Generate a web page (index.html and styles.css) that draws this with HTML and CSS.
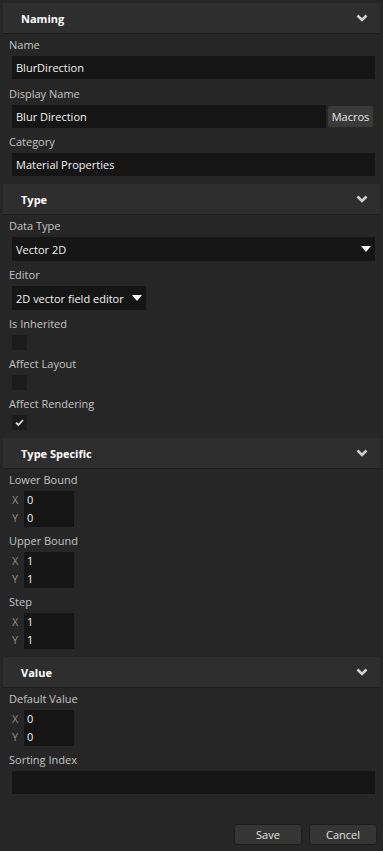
FILE: index.html
```html
<!DOCTYPE html>
<html lang="en">
<head>
    <meta charset="UTF-8">
    <meta name="viewport" content="width=device-width, initial-scale=1.0">
    <title>Property Editor</title>
    <link rel="stylesheet" href="styles.css">
</head>
<body>
    <div class="panel">
        <!-- Naming -->
        <section class="group">
            <div class="group-header">
                <span>Naming</span>
                <svg class="chevron" width="12" height="8" viewBox="0 0 12 8"><path d="M1.5 1.5 L6 6 L10.5 1.5" fill="none" stroke="#d0d0d0" stroke-width="2.6"/></svg>
            </div>
            <div class="group-body">
                <div class="field">
                    <div class="field-label">Name</div>
                    <div class="text-input">BlurDirection</div>
                </div>
                <div class="field">
                    <div class="field-label">Display Name</div>
                    <div class="input-row">
                        <div class="text-input">Blur Direction</div>
                        <button class="macro-btn">Macros</button>
                    </div>
                </div>
                <div class="field">
                    <div class="field-label">Category</div>
                    <div class="text-input">Material Properties</div>
                </div>
            </div>
        </section>

        <!-- Type -->
        <section class="group">
            <div class="group-header">
                <span>Type</span>
                <svg class="chevron" width="12" height="8" viewBox="0 0 12 8"><path d="M1.5 1.5 L6 6 L10.5 1.5" fill="none" stroke="#d0d0d0" stroke-width="2.6"/></svg>
            </div>
            <div class="group-body">
                <div class="field">
                    <div class="field-label">Data Type</div>
                    <div class="select">
                        <span>Vector 2D</span>
                        <svg class="caret" width="10" height="6" viewBox="0 0 10 6"><path d="M0 0 H10 L5 6 Z" fill="#f4f4f4"/></svg>
                    </div>
                </div>
                <div class="field">
                    <div class="field-label">Editor</div>
                    <div class="select select-short">
                        <span>2D vector field editor</span>
                        <svg class="caret" width="10" height="6" viewBox="0 0 10 6"><path d="M0 0 H10 L5 6 Z" fill="#f4f4f4"/></svg>
                    </div>
                </div>
                <div class="field">
                    <div class="field-label">Is Inherited</div>
                    <div class="checkbox"></div>
                </div>
                <div class="field">
                    <div class="field-label">Affect Layout</div>
                    <div class="checkbox"></div>
                </div>
                <div class="field">
                    <div class="field-label">Affect Rendering</div>
                    <div class="checkbox">
                        <svg width="15" height="15" viewBox="0 0 15 15"><path d="M4 7.6 L6.4 10 L11 5" fill="none" stroke="#e8e8e8" stroke-width="1.8"/></svg>
                    </div>
                </div>
            </div>
        </section>

        <!-- Type Specific -->
        <section class="group">
            <div class="group-header">
                <span>Type Specific</span>
                <svg class="chevron" width="12" height="8" viewBox="0 0 12 8"><path d="M1.5 1.5 L6 6 L10.5 1.5" fill="none" stroke="#d0d0d0" stroke-width="2.6"/></svg>
            </div>
            <div class="group-body">
                <div class="field">
                    <div class="field-label">Lower Bound</div>
                    <div class="vector">
                        <div class="vector-axes"><span>X</span><span>Y</span></div>
                        <div class="vector-values"><span>0</span><span>0</span></div>
                    </div>
                </div>
                <div class="field">
                    <div class="field-label">Upper Bound</div>
                    <div class="vector">
                        <div class="vector-axes"><span>X</span><span>Y</span></div>
                        <div class="vector-values"><span>1</span><span>1</span></div>
                    </div>
                </div>
                <div class="field">
                    <div class="field-label">Step</div>
                    <div class="vector">
                        <div class="vector-axes"><span>X</span><span>Y</span></div>
                        <div class="vector-values"><span>1</span><span>1</span></div>
                    </div>
                </div>
            </div>
        </section>

        <!-- Value -->
        <section class="group">
            <div class="group-header">
                <span>Value</span>
                <svg class="chevron" width="12" height="8" viewBox="0 0 12 8"><path d="M1.5 1.5 L6 6 L10.5 1.5" fill="none" stroke="#d0d0d0" stroke-width="2.6"/></svg>
            </div>
            <div class="group-body">
                <div class="field">
                    <div class="field-label">Default Value</div>
                    <div class="vector">
                        <div class="vector-axes"><span>X</span><span>Y</span></div>
                        <div class="vector-values"><span>0</span><span>0</span></div>
                    </div>
                </div>
                <div class="field">
                    <div class="field-label">Sorting Index</div>
                    <div class="text-input"></div>
                </div>
            </div>
        </section>

        <div class="actions">
            <button class="action-btn">Save</button>
            <button class="action-btn">Cancel</button>
        </div>
    </div>
</body>
</html>
```

FILE: styles.css
```css
body {
    margin: 0;
    background-color: #262626;
    font-family: "Open Sans", "Noto Sans", sans-serif;
    font-size: 11px;
    color: #c4c4c4;
}
.panel {
    display: flex;
    flex-direction: column;
    gap: 8px;
    height: 100vh;
    padding: 3px 3px 0;
    box-sizing: border-box;
}

/* group header */
.group-header {
    display: flex;
    justify-content: space-between;
    align-items: center;
    height: 30px;
    padding: 0 12px 0 18px;
    background-color: #2e2e2e;
    border-bottom: 1px solid #1d1d1d;
    color: #ffffff;
    font-weight: bold;
}
.group-body {
    display: flex;
    flex-direction: column;
    gap: 3px;
    padding: 0 5px 0 6px;
}

/* fields */
.field-label {
    height: 22px;
    line-height: 22px;
    white-space: nowrap;
}
.text-input {
    height: 23px;
    line-height: 23px;
    margin-left: 3px;
    margin-bottom: 1px;
    padding: 0 4px;
    background-color: #151515;
    color: #f2f2f2;
    white-space: nowrap;
}
.field:last-child > .text-input {
    margin-bottom: 0;
}
.input-row {
    display: flex;
    align-items: center;
    gap: 2px;
}
.input-row .text-input {
    flex: 1;
    margin-bottom: 0;
}
.macro-btn {
    width: 45px;
    height: 21px;
    margin-right: 2px;
    padding: 0;
    border: none;
    border-radius: 2px;
    background-color: #3a3a3a;
    color: #e6e6e6;
    font-family: inherit;
    font-size: 11px;
}
.select {
    display: flex;
    justify-content: space-between;
    align-items: center;
    height: 24px;
    margin-left: 3px;
    padding: 0 4px;
    background-color: #151515;
    color: #f2f2f2;
    white-space: nowrap;
}
.select-short {
    align-self: flex-start;
    width: 126px;
}
.checkbox {
    width: 15px;
    height: 15px;
    margin-left: 3px;
    background-color: #1b1b1b;
}
.checkbox svg {
    display: block;
}

/* vector editor */
.vector {
    display: flex;
    margin-left: 3px;
}
.vector-axes,
.vector-values {
    display: flex;
    flex-direction: column;
}
.vector-axes span,
.vector-values span {
    height: 18px;
    line-height: 18px;
}
.vector-axes {
    width: 12px;
    color: #8e8e8e;
}
.vector-values {
    width: 47px;
    padding-left: 3px;
    background-color: #151515;
    color: #f2f2f2;
}

/* footer */
.actions {
    display: flex;
    justify-content: flex-end;
    gap: 7px;
    margin-top: auto;
    padding: 0 3px 6px 0;
}
.action-btn {
    width: 68px;
    height: 21px;
    padding: 0;
    border: 1px solid #1c1c1c;
    border-radius: 3px;
    background-color: #353535;
    color: #e2e2e2;
    font-family: inherit;
    font-size: 11px;
}
```
